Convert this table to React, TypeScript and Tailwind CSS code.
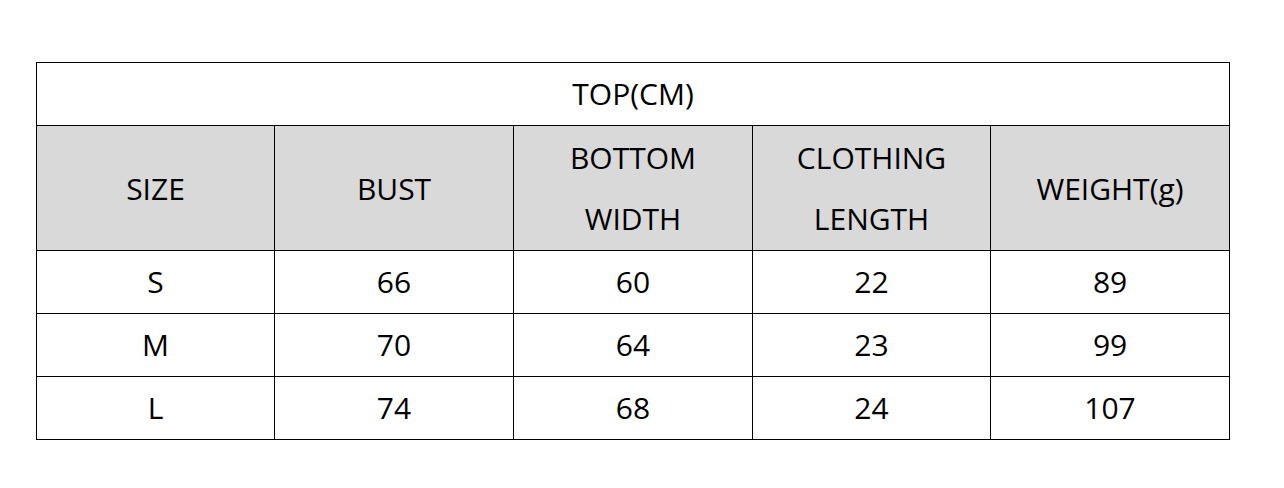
const header = ["SIZE", "BUST", "BOTTOM\nWIDTH", "CLOTHING\nLENGTH", "WEIGHT(g)"];

const rows = [
  ["S", "66", "60", "22", "89"],
  ["M", "70", "64", "23", "99"],
  ["L", "74", "68", "24", "107"],
];

export default function App() {
  return (
    <div className="w-[1284px] h-[488px] bg-white pl-[36px] pt-[62px] font-['Open_Sans',sans-serif] text-[30px] text-black">
      <table className="border-collapse table-fixed w-[1193px]">
        <colgroup>
          <col className="w-[238px]" />
          <col className="w-[239px]" />
          <col className="w-[239px]" />
          <col className="w-[238px]" />
          <col className="w-[239px]" />
        </colgroup>
        <tbody>
          <tr className="h-[63px]">
            <td colSpan={5} className="border border-black text-center p-0 leading-none">
              TOP(CM)
            </td>
          </tr>
          <tr className="h-[125px] bg-[#d9d9d9]">
            {header.map((h) => (
              <td key={h} className="border border-black text-center p-0 leading-[61px] whitespace-pre-line">
                {h}
              </td>
            ))}
          </tr>
          {rows.map((r, i) => (
            <tr key={i} className="h-[63px]">
              {r.map((c, j) => (
                <td key={j} className="border border-black text-center p-0 leading-none">
                  {c}
                </td>
              ))}
            </tr>
          ))}
        </tbody>
      </table>
    </div>
  );
}
